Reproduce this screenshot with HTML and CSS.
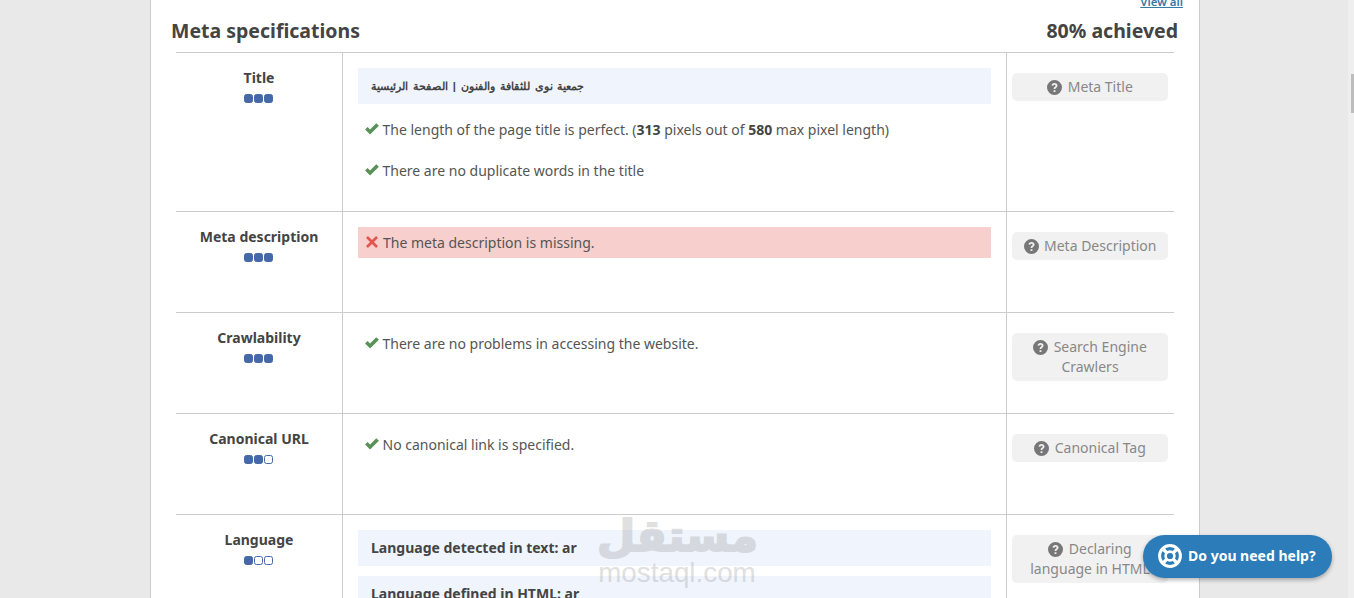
FILE: index.html
```html
<!DOCTYPE html>
<html lang="en">
<head>
  <meta charset="UTF-8">
  <title>Meta specifications</title>
  <link rel="stylesheet" href="styles.css">
</head>
<body>
  <svg class="icon-defs" width="0" height="0">
    <symbol id="i-check" viewBox="0.5 0.5 13 10.8"><path d="M0.6 6.3 L2.9 4.1 L5.2 6.4 L11 0.6 L13.4 2.9 L5.2 11 Z"/></symbol>
    <symbol id="i-cross" viewBox="1 1 10 10"><path d="M1 2.6 L2.6 1 L6 4.4 L9.4 1 L11 2.6 L7.6 6 L11 9.4 L9.4 11 L6 7.6 L2.6 11 L1 9.4 L4.4 6 Z"/></symbol>
    <symbol id="i-help" viewBox="0 0 16 16"><path fill-rule="evenodd" d="M8 0a8 8 0 1 1 0 16A8 8 0 0 1 8 0ZM8 3.2c-1.8 0-3 1-3.2 2.6l1.9.4c.1-.8.6-1.2 1.3-1.2s1.2.4 1.2 1c0 .5-.3.8-.9 1.2-.8.5-1.2 1.1-1.2 2v.4h1.9v-.3c0-.4.2-.6.8-1 .9-.6 1.4-1.3 1.4-2.4 0-1.6-1.3-2.7-3.2-2.7ZM7 11v1.9h2V11Z"/></symbol>
  </svg>

  <div class="card">
    <a class="view-all" href="#">View all</a>
    <div class="card-head">
      <h2>Meta specifications</h2>
      <h2>80% achieved</h2>
    </div>

    <div class="row row-title">
      <div class="name">Title<div class="dots"><i class="on"></i><i class="on"></i><i class="on"></i></div></div>
      <div class="main">
        <div class="box box-title"><span lang="ar">جمعية نوى للثقافة والفنون | الصفحة الرئيسية</span></div>
        <p class="msg"><svg class="check"><use href="#i-check"/></svg>The length of the page title is perfect. (<b>313</b> pixels out of <b>580</b> max pixel length)</p>
        <p class="msg"><svg class="check"><use href="#i-check"/></svg>There are no duplicate words in the title</p>
      </div>
      <div class="side"><a class="tag" href="#"><svg class="help"><use href="#i-help"/></svg>Meta Title</a></div>
    </div>

    <div class="row">
      <div class="name">Meta description<div class="dots"><i class="on"></i><i class="on"></i><i class="on"></i></div></div>
      <div class="main">
        <p class="msg msg-bad"><svg class="cross"><use href="#i-cross"/></svg>The meta description is missing.</p>
      </div>
      <div class="side"><a class="tag" href="#"><svg class="help"><use href="#i-help"/></svg>Meta Description</a></div>
    </div>

    <div class="row">
      <div class="name">Crawlability<div class="dots"><i class="on"></i><i class="on"></i><i class="on"></i></div></div>
      <div class="main">
        <p class="msg"><svg class="check"><use href="#i-check"/></svg>There are no problems in accessing the website.</p>
      </div>
      <div class="side"><a class="tag" href="#"><svg class="help"><use href="#i-help"/></svg>Search Engine Crawlers</a></div>
    </div>

    <div class="row">
      <div class="name">Canonical URL<div class="dots"><i class="on"></i><i class="on"></i><i></i></div></div>
      <div class="main">
        <p class="msg"><svg class="check"><use href="#i-check"/></svg>No canonical link is specified.</p>
      </div>
      <div class="side"><a class="tag" href="#"><svg class="help"><use href="#i-help"/></svg>Canonical Tag</a></div>
    </div>

    <div class="row">
      <div class="name">Language<div class="dots"><i class="on"></i><i></i><i></i></div></div>
      <div class="main">
        <div class="box"><b>Language detected in text: ar</b></div>
        <div class="box"><b>Language defined in HTML: ar</b></div>
      </div>
      <div class="side"><a class="tag" href="#"><svg class="help"><use href="#i-help"/></svg>Declaring language in HTML</a></div>
    </div>
  </div>

  <div class="watermark">
    <span class="wm-ar" lang="ar">مستقل</span>
    <span class="wm-en">mostaql.com</span>
  </div>

  <div class="scrollbar"><div class="thumb"></div></div>

  <a class="help-btn" href="#">
    <svg viewBox="0 0 26 26" width="26" height="26" fill="none" stroke="#fff">
      <circle cx="13" cy="13" r="10.4" stroke-width="3"/>
      <circle cx="13" cy="13" r="4.4" stroke-width="2.6"/>
      <path d="M6 6l3.6 3.6M20 6l-3.6 3.6M6 20l3.6-3.6M20 20l-3.6-3.6" stroke-width="3.4"/>
    </svg>
    Do you need help?
  </a>
</body>
</html>
```

FILE: styles.css
```css
html, body {
  margin: 0;
  padding: 0;
  height: 100%;
  overflow: hidden;
  background-color: #e9e9e9;
  font-family: "Noto Sans", "Open Sans", sans-serif;
  font-size: 14px;
  color: #555;
}
.icon-defs {
  position: absolute;
}
.card {
  box-sizing: border-box;
  width: 1050px;
  margin: -30px 0 0 150px;
  padding: 30px 25px 0 25px;
  height: 900px;
  background-color: #fff;
  border-left: 1px solid #ccc;
  border-right: 1px solid #ccc;
  position: relative;
}
.view-all {
  position: absolute;
  top: 24px;
  right: 16px;
  font-size: 11.5px;
  font-weight: 600;
  color: #3778a8;
}
.card-head {
  display: flex;
  justify-content: space-between;
  margin: 0 -4px 0 -5px;
  height: 52px;
  box-sizing: border-box;
  padding-top: 8px;
  align-items: center;
}
h2 {
  margin: 0;
  font-size: 19.5px;
  font-weight: 700;
  color: #444;
}
.row {
  display: grid;
  grid-template-columns: 166px 665px 167px;
  min-height: 100px;
  border-top: 1px solid #ccc;
}
.row-title {
  min-height: 158px;
}
.name {
  padding-top: 15px;
  text-align: center;
  font-weight: 700;
  color: #444;
  line-height: 20px;
}
.dots {
  display: flex;
  justify-content: center;
  gap: 1px;
  margin: 6px 2px 0 0;
}
.dots i {
  box-sizing: border-box;
  width: 9px;
  height: 9px;
  border: 1px solid #4468a8;
  border-radius: 2.5px;
}
.dots i.on {
  background-color: #4468a8;
}
.main {
  border-left: 1px solid #ccc;
  border-right: 1px solid #ccc;
  padding: 15px 15px 0 15px;
}
.box {
  background-color: #f0f5fd;
  padding: 8px 13px;
  line-height: 20px;
  margin-bottom: 10px;
  color: #444;
}
.box-title {
  height: 36px;
  box-sizing: border-box;
  font-family: "Liberation Sans", sans-serif;
  font-size: 11.1px;
  word-spacing: 1.8px;
  font-weight: 700;
  white-space: nowrap;
}
.msg {
  margin: 0;
  padding: 6px 7px 5px;
  height: 31px;
  box-sizing: border-box;
  line-height: 20px;
  display: block;
  white-space: nowrap;
}
.msg + .msg {
  margin-top: 10px;
}
.msg b {
  color: #444;
}
.check {
  width: 14px;
  height: 12px;
  margin-right: 3.5px;
  fill: #5a9158;
}
.cross {
  width: 12px;
  height: 12px;
  margin: 0 5px 0 1px;
  fill: #e3564f;
}
.msg-bad {
  background-color: #f7cfcd;
}
.side {
  padding: 20px 6px 0 5px;
}
.tag {
  display: block;
  padding: 4px 8px;
  background-color: #f1f1f1;
  border-radius: 5px;
  color: #888;
  text-align: center;
  line-height: 20px;
  text-decoration: none;
}
.help {
  width: 15px;
  height: 15px;
  margin-right: 5.5px;
  vertical-align: -3px;
  fill: #777;
}
.watermark {
  position: absolute;
  left: 597px;
  top: 506px;
  width: 160px;
  text-align: center;
  color: #8a8a8a;
  opacity: 0.26;
  pointer-events: none;
}
.wm-ar {
  display: block;
  font-family: "Noto Sans", "DejaVu Sans", sans-serif;
  font-size: 44px;
  font-weight: 700;
  line-height: 56px;
  -webkit-text-stroke: 2px #8a8a8a;
}
.wm-en {
  display: block;
  font-family: "Liberation Sans", sans-serif;
  font-size: 27.8px;
  line-height: 21px;
}
.scrollbar {
  position: absolute;
  top: 0;
  right: 0;
  width: 6px;
  height: 100%;
  background-color: #efefef;
}
.thumb {
  margin: 74px 0 0 3px;
  height: 39px;
  background-color: #bdbdbd;
}
.help-btn {
  position: absolute;
  left: 1143px;
  top: 535px;
  width: 189px;
  height: 43px;
  box-sizing: border-box;
  padding: 0 0 2px 14px;
  display: flex;
  align-items: center;
  gap: 5px;
  border-radius: 22px;
  background-color: #2b7cb8;
  color: #fff;
  font-weight: 700;
  font-size: 14px;
  text-decoration: none;
  box-shadow: 0 2px 4px rgba(0,0,0,0.3);
}
```
